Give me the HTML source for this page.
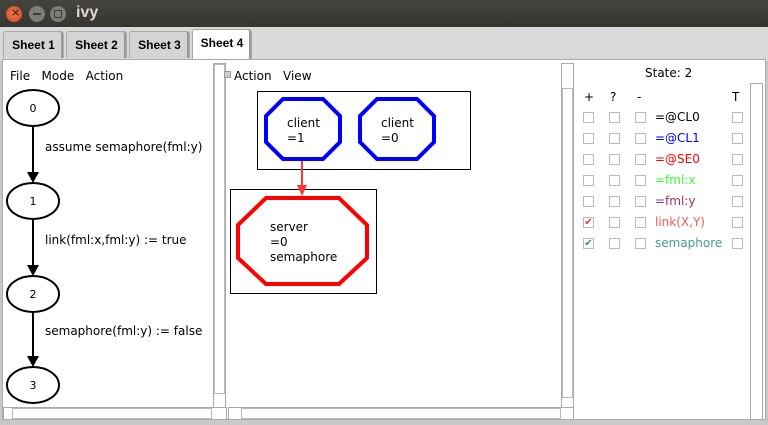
<!DOCTYPE html>
<html><head><style>
*{margin:0;padding:0;box-sizing:border-box}
body{width:768px;height:425px;overflow:hidden;background:#c8c8c8;font-family:"DejaVu Sans","Liberation Sans",sans-serif;font-size:12px;position:relative}
.a{position:absolute}
.title{left:0;top:0;width:768px;height:27px;background:linear-gradient(#45443f,#363531);}
.btn{width:16px;height:16px;border-radius:50%;top:6px}
.tabbar{left:0;top:27px;width:768px;height:34px;background:#d9d9d9}
.tab{top:31px;height:27px;background:#d4d4d4;border:1px solid #aaa;border-bottom:none;border-radius:3px 3px 0 0;font-weight:bold;font-family:"Liberation Sans",sans-serif;font-size:12px;text-align:center;line-height:27px;box-shadow:inset -2px 0 #999}
.sb{background:#fff;border:1px solid #aaa}
.cb{width:11px;height:11px;border:1px solid #bbb;background:#fff}
.lab{font-size:12px}
</style></head><body>
<div class="a title"></div>
<div class="a btn" style="left:6px;background:radial-gradient(#f37b4d,#d2461c);"></div>
<div class="a btn" style="left:29px;background:#7d7c77"></div>
<div class="a btn" style="left:50px;background:#7d7c77"></div>
<div class="a" style="left:11px;top:6px;color:#3a2a20;font-size:11px;font-weight:bold">×</div>
<div class="a" style="left:33px;top:13px;width:8px;height:2px;background:#3d3c38"></div>
<div class="a" style="left:54px;top:10px;width:8px;height:8px;border:1px solid #3d3c38"></div>
<div class="a" style="left:76px;top:4px;color:#dfdbd2;font-size:16px;font-weight:bold;font-family:'Liberation Sans',sans-serif">ivy</div>
<div class="a tabbar"></div>
<div class="a tab" style="left:3px;width:61px">Sheet 1</div>
<div class="a tab" style="left:66px;width:61px">Sheet 2</div>
<div class="a tab" style="left:129px;width:61px">Sheet 3</div>
<div class="a tab" style="left:192px;width:60px;background:#fff;height:30px;top:29px">Sheet 4</div>
<div class="a" style="left:2px;top:59px;width:764px;height:361px;background:#fff;border:1px solid #aaa"></div>

<div class="a" style="left:10px;top:69px">File&nbsp;&nbsp;&nbsp;Mode&nbsp;&nbsp;&nbsp;Action</div>
<div class="a sb" style="left:213px;top:63px;width:13px;height:345px"></div>
<div class="a sb" style="left:214px;top:64px;width:11px;height:330px;border-color:#bbb"></div>
<div class="a sb" style="left:3px;top:407px;width:224px;height:13px"></div>
<div class="a sb" style="left:12px;top:408px;width:200px;height:11px;border-color:#bbb"></div>
<svg class="a" style="left:0;top:0" width="768" height="425">
<g fill="none" stroke="#000" stroke-width="2">
<ellipse cx="33" cy="108" rx="26" ry="18"/>
<ellipse cx="33" cy="201" rx="26" ry="18"/>
<ellipse cx="33" cy="294" rx="26" ry="18"/>
<ellipse cx="33" cy="385" rx="26" ry="18"/>
<line x1="33" y1="126" x2="33" y2="175"/>
<line x1="33" y1="219" x2="33" y2="268"/>
<line x1="33" y1="312" x2="33" y2="359"/>
</g>
<polygon points="27,172 39,172 33,183" fill="#000"/>
<polygon points="27,265 39,265 33,276" fill="#000"/>
<polygon points="27,356 39,356 33,367" fill="#000"/>
<g font-family="DejaVu Sans,sans-serif" font-size="11" text-anchor="middle">
<text x="33" y="112">0</text><text x="33" y="205">1</text><text x="33" y="298">2</text><text x="33" y="389">3</text></g>
<g font-family="DejaVu Sans,sans-serif" font-size="12">
<text x="45" y="151">assume semaphore(fml:y)</text>
<text x="45" y="244">link(fml:x,fml:y) := true</text>
<text x="45" y="335">semaphore(fml:y) := false</text>
</g>
<rect x="257.5" y="91.5" width="213" height="78" fill="none" stroke="#000"/>
<rect x="230.5" y="189.5" width="146" height="104" fill="none" stroke="#000"/>
<g fill="none" stroke="#00f" stroke-width="4">
<polygon points="283,99 323,99 340,116 340,142 323,159 283,159 266,142 266,116"/>
<polygon points="377,99 417,99 434,116 434,142 417,159 377,159 360,142 360,116"/>
</g>
<polygon points="266,198 339,198 367,225 367,258 339,284 266,284 238,258 238,225" fill="none" stroke="#f00" stroke-width="4"/>
<line x1="302" y1="161" x2="302" y2="187" stroke="#f33" stroke-width="2"/>
<polygon points="297,185 307,185 302,196" fill="#f33"/>
<g font-family="DejaVu Sans,sans-serif" font-size="12">
<text x="287" y="127">client</text><text x="287" y="142">=1</text>
<text x="381" y="127">client</text><text x="381" y="142">=0</text>
<text x="270" y="231">server</text><text x="270" y="246">=0</text><text x="270" y="261">semaphore</text>
</g>
</svg>
<div class="a" style="left:224px;top:71px;width:7px;height:7px;background:#ccc;border:1px solid #999"></div>
<div class="a" style="left:234px;top:69px">Action&nbsp;&nbsp;&nbsp;View</div>
<div class="a sb" style="left:561px;top:63px;width:13px;height:345px"></div>
<div class="a sb" style="left:562px;top:88px;width:11px;height:310px;border-color:#bbb"></div>
<div class="a sb" style="left:228px;top:407px;width:346px;height:13px"></div>
<div class="a sb" style="left:241px;top:408px;width:320px;height:11px;border-color:#bbb"></div>

<div class="a" style="left:645px;top:66px">State: 2</div>
<div class="a sb" style="left:750px;top:83px;width:13px;height:337px"></div>
<div class="a" style="left:584px;top:90px">+</div>
<div class="a" style="left:610px;top:90px">?</div>
<div class="a" style="left:637px;top:90px">-</div>
<div class="a" style="left:732px;top:90px">T</div>
<div class="a cb" style="left:583px;top:112px"></div><div class="a cb" style="left:609px;top:112px"></div><div class="a cb" style="left:635px;top:112px"></div><div class="a cb" style="left:732px;top:112px"></div><div class="a lab" style="left:655px;top:110px;color:#000">=@CL0</div>
<div class="a cb" style="left:583px;top:133px"></div><div class="a cb" style="left:609px;top:133px"></div><div class="a cb" style="left:635px;top:133px"></div><div class="a cb" style="left:732px;top:133px"></div><div class="a lab" style="left:655px;top:131px;color:#00f">=@CL1</div>
<div class="a cb" style="left:583px;top:154px"></div><div class="a cb" style="left:609px;top:154px"></div><div class="a cb" style="left:635px;top:154px"></div><div class="a cb" style="left:732px;top:154px"></div><div class="a lab" style="left:655px;top:152px;color:#f00">=@SE0</div>
<div class="a cb" style="left:583px;top:175px"></div><div class="a cb" style="left:609px;top:175px"></div><div class="a cb" style="left:635px;top:175px"></div><div class="a cb" style="left:732px;top:175px"></div><div class="a lab" style="left:655px;top:173px;color:#3f3">=fml:x</div>
<div class="a cb" style="left:583px;top:196px"></div><div class="a cb" style="left:609px;top:196px"></div><div class="a cb" style="left:635px;top:196px"></div><div class="a cb" style="left:732px;top:196px"></div><div class="a lab" style="left:655px;top:194px;color:#a03060">=fml:y</div>
<div class="a cb" style="left:583px;top:217px;color:#e33;font-size:10px;line-height:9px;text-align:center">✔</div><div class="a cb" style="left:609px;top:217px"></div><div class="a cb" style="left:635px;top:217px"></div><div class="a cb" style="left:732px;top:217px"></div><div class="a lab" style="left:655px;top:215px;color:#f55">link(X,Y)</div>
<div class="a cb" style="left:583px;top:238px;color:#488;font-size:10px;line-height:9px;text-align:center">✔</div><div class="a cb" style="left:609px;top:238px"></div><div class="a cb" style="left:635px;top:238px"></div><div class="a cb" style="left:732px;top:238px"></div><div class="a lab" style="left:655px;top:236px;color:#4a9a9a">semaphore</div>
</body></html>
